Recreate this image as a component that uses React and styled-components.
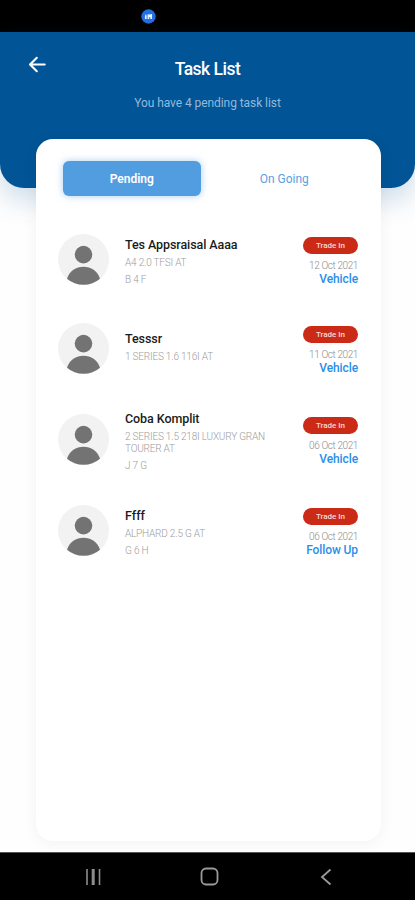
import React, {useState} from 'react';
import styled, {createGlobalStyle} from 'styled-components';

const GlobalStyle = createGlobalStyle`
    * {
        box-sizing: border-box;
    }
    body {
        margin: 0;
        background-color: #fefefe;
        font-family: Roboto, "Liberation Sans", sans-serif;
    }
`;

const Screen = styled.div`
    width: 415px;
    height: 900px;
    display: flex;
    flex-direction: column;
    overflow: hidden;
    background-color: #fefefe;
`;

const StatusBar = styled.div`
    flex: none;
    height: 32px;
    padding-left: 141px;
    display: flex;
    align-items: center;
    background-color: #000000;
`;

const Header = styled.header`
    flex: none;
    height: 156px;
    padding: 24px 27px 0;
    display: grid;
    grid-template-columns: 20px 1fr 20px;
    align-content: start;
    border-radius: 0 0 24px 24px;
    background-color: #015495;
    box-shadow: 0 12px 28px rgba(1, 84, 149, 0.2);
`;

const BackButton = styled.button`
    width: 20px;
    height: 18px;
    padding: 0;
    border: 0;
    background: none;
`;

const Title = styled.h1`
    margin: 2px 0 0;
    height: 22px;
    font-size: 17.5px;
    font-weight: 500;
    line-height: 22px;
    letter-spacing: -0.5px;
    text-align: center;
    color: #ffffff;
`;

const Subtitle = styled.p`
    grid-column: 1 / -1;
    margin: 15px 0 0;
    font-size: 12px;
    line-height: 16px;
    letter-spacing: -0.07px;
    text-align: center;
    color: #94b9dc;
`;

const Card = styled.main`
    flex: none;
    position: relative;
    width: 345px;
    height: 702px;
    margin: -49px 0 0 36px;
    padding: 22px 23px 0 22px;
    border-radius: 17px;
    background-color: #ffffff;
    box-shadow: 0 2px 16px rgba(0, 0, 0, 0.05);
`;

const Tabs = styled.div`
    padding: 0 5px;
    display: flex;
    gap: 15px;
`;

const Tab = styled.button`
    width: 138px;
    height: 35px;
    padding: 0;
    border: 0;
    border-radius: 6px;
    font-family: inherit;
    font-size: 12px;
    font-weight: ${props => (props.$active ? 600 : 400)};
    letter-spacing: 0;
    color: ${props => (props.$active ? '#ffffff' : '#5a9fe0')};
    background-color: ${props => (props.$active ? '#529ce0' : 'transparent')};
    box-shadow: ${props => (props.$active ? '0 0 7px rgba(82, 156, 224, 0.5)' : 'none')};
`;

const List = styled.div`
    margin-top: 38px;
    display: flex;
    flex-direction: column;
`;

const Row = styled.div`
    height: 51px;
    margin-bottom: ${props => props.$gap}px;
    display: flex;
    align-items: flex-start;
`;

const Avatar = styled.svg`
    flex: none;
    width: 51px;
    height: 51px;
`;

const Info = styled.div`
    width: 150px;
    margin: ${props => props.$top}px 0 0 16px;
`;

const Name = styled.div`
    font-size: 12.5px;
    font-weight: 500;
    line-height: 15px;
    letter-spacing: -0.08px;
    white-space: nowrap;
    color: #1b1b1b;
`;

const Detail = styled.div`
    margin-top: ${props => props.$space}px;
    font-size: 10px;
    font-weight: 300;
    line-height: 12px;
    letter-spacing: -0.2px;
    color: #9c9c9c;
`;

const Meta = styled.div`
    margin: 3px 0 0 auto;
    display: flex;
    flex-direction: column;
    align-items: flex-end;
    white-space: nowrap;
`;

const Pill = styled.div`
    width: 55px;
    height: 17px;
    border-radius: 9px;
    font-size: 8px;
    font-weight: 500;
    line-height: 18px;
    text-align: center;
    color: #f9dcd4;
    background-color: #cb2a16;
`;

const DateText = styled.div`
    margin-top: 6px;
    font-size: 10px;
    font-weight: 300;
    line-height: 12px;
    letter-spacing: -0.4px;
    color: #8c8c8c;
`;

const Stage = styled.div`
    font-size: 12px;
    font-weight: 500;
    line-height: 14px;
    letter-spacing: -0.1px;
    color: #2b8fea;
`;

const NavBar = styled.nav`
    flex: none;
    height: 48px;
    margin-top: auto;
    padding: 0 31px 0 35px;
    display: grid;
    grid-template-columns: repeat(3, 1fr);
    align-items: center;
    justify-items: center;
    position: relative;
    border-top: 1px solid #555555;
    background-color: #000000;
`;

const tasks = [
  {name: 'Tes Appsraisal Aaaa', car: 'A4 2.0 TFSI AT', plate: 'B 4 F', date: '12 Oct 2021', stage: 'Vehicle', top: 3, gap: 38},
  {name: 'Tesssr', car: '1 SERIES 1.6 116I AT', date: '11 Oct 2021', stage: 'Vehicle', top: 8, gap: 40},
  {name: 'Coba Komplit', car: '2 SERIES 1.5 218I LUXURY GRAN TOURER AT', plate: 'J 7 G', date: '06 Oct 2021', stage: 'Vehicle', top: -3, gap: 40},
  {name: 'Ffff', car: 'ALPHARD 2.5 G AT', plate: 'G 6 H', date: '06 Oct 2021', stage: 'Follow Up', top: 3, gap: 0},
];

function UserAvatar() {
  return (
    <Avatar viewBox="0 0 51 51">
      <circle cx="25.5" cy="25.5" r="25.5" fill="#f2f2f2" />
      <circle cx="25.5" cy="20.6" r="8.8" fill="#737373" />
      <path d="M9 44.8C11.5 37 18 32.8 25.5 32.8S39.5 37 42 44.8A25.5 25.5 0 0 1 9 44.8Z" fill="#737373" />
    </Avatar>
  );
}

function Task({task}) {
  return (
    <Row $gap={task.gap}>
      <UserAvatar />
      <Info $top={task.top}>
        <Name>{task.name}</Name>
        <Detail $space={5}>{task.car}</Detail>
        {task.plate && <Detail $space={5}>{task.plate}</Detail>}
      </Info>
      <Meta>
        <Pill>Trade In</Pill>
        <DateText>{task.date}</DateText>
        <Stage>{task.stage}</Stage>
      </Meta>
    </Row>
  );
}

function App() {
  const [tab, setTab] = useState('pending');
  return (
    <>
      <GlobalStyle />
      <Screen>
        <StatusBar>
          <svg width="15" height="15" viewBox="0 0 15 15">
            <circle cx="7.5" cy="7.5" r="7.2" fill="#226fe5" />
            <path d="M4.8 10V6.3M4.8 5.2V5M7.4 10V5.5M7.4 5.8L9.8 7.5M10.2 10V5" stroke="#e8f2ff" strokeWidth="1.7" fill="none" />
          </svg>
        </StatusBar>
        <Header>
          <BackButton aria-label="Back">
            <svg width="20" height="18" viewBox="0 0 20 18" fill="none" stroke="#ffffff" strokeWidth="2.1" strokeLinecap="round" strokeLinejoin="round">
              <path d="M17.7 8.5H3.5M9.8 1.8L3 8.5L9.8 15.2" />
            </svg>
          </BackButton>
          <Title>Task List</Title>
          <Subtitle>You have 4 pending task list</Subtitle>
        </Header>
        <Card>
          <Tabs>
            <Tab $active={tab === 'pending'} onClick={() => setTab('pending')}>Pending</Tab>
            <Tab $active={tab === 'ongoing'} onClick={() => setTab('ongoing')}>On Going</Tab>
          </Tabs>
          <List>
            {tasks.map(task => <Task key={task.name} task={task} />)}
          </List>
        </Card>
        <NavBar>
          <svg width="18" height="18" viewBox="0 0 18 18" stroke="#8d8d8d">
            <path d="M3 1V17M15.5 1V17" strokeWidth="1.6" />
            <path d="M9.2 1V17" strokeWidth="3" />
          </svg>
          <svg width="19" height="19" viewBox="0 0 19 19" fill="none" stroke="#9a9a9a" strokeWidth="1.8">
            <rect x="1.5" y="1.5" width="16" height="16" rx="4.5" />
          </svg>
          <svg width="12" height="18" viewBox="0 0 12 18" fill="none" stroke="#9a9a9a" strokeWidth="1.8">
            <path d="M10.5 1.5L2 9L10.5 16.5" />
          </svg>
        </NavBar>
      </Screen>
    </>
  );
}

export default App;
